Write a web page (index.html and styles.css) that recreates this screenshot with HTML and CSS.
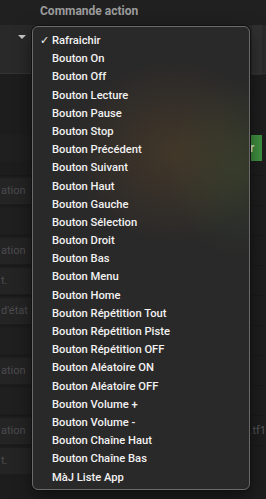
FILE: index.html
```html
<!DOCTYPE html>
<html lang="fr">
<head>
  <meta charset="UTF-8">
  <title>Commande action</title>
  <link rel="stylesheet" href="styles.css">
</head>
<body>
  <div class="page">
    <div class="section-title">Commande action</div>
    <div class="select-row">
      <span class="select-arrow"></span>
      <span class="select-side"></span>
    </div>
    <!-- faint form behind the open menu -->
    <div class="form">
      <div class="form-row top-row">
        <span class="field blank"></span>
        <span class="btn-green">r</span>
      </div>
      <div class="form-row"><span class="field">ation</span></div>
      <div class="form-row"><span class="field blank"></span></div>
      <div class="form-row"><span class="field">ation</span></div>
      <div class="form-row"><span class="field">t.</span></div>
      <div class="form-row"><span class="field">d'état</span></div>
      <div class="form-row"><span class="field blank"></span></div>
      <div class="form-row"><span class="field">ation</span></div>
      <div class="form-row"><span class="field blank"></span></div>
      <div class="form-row">
        <span class="field">ation</span>
        <span class="side-text">.tf1</span>
      </div>
      <div class="form-row"><span class="field">t.</span></div>
      <div class="form-row last-row">
        <span class="unit">A.n</span>
        <span class="unit wide">Unité</span>
      </div>
    </div>
  </div>

  <!-- open select menu -->
  <div class="menu">
    <ul class="menu-list">
      <li class="menu-item checked">Rafraichir</li>
      <li class="menu-item">Bouton On</li>
      <li class="menu-item">Bouton Off</li>
      <li class="menu-item">Bouton Lecture</li>
      <li class="menu-item">Bouton Pause</li>
      <li class="menu-item">Bouton Stop</li>
      <li class="menu-item">Bouton Précédent</li>
      <li class="menu-item">Bouton Suivant</li>
      <li class="menu-item">Bouton Haut</li>
      <li class="menu-item">Bouton Gauche</li>
      <li class="menu-item">Bouton Sélection</li>
      <li class="menu-item">Bouton Droit</li>
      <li class="menu-item">Bouton Bas</li>
      <li class="menu-item">Bouton Menu</li>
      <li class="menu-item">Bouton Home</li>
      <li class="menu-item">Bouton Répétition Tout</li>
      <li class="menu-item">Bouton Répétition Piste</li>
      <li class="menu-item">Bouton Répétition OFF</li>
      <li class="menu-item">Bouton Aléatoire ON</li>
      <li class="menu-item">Bouton Aléatoire OFF</li>
      <li class="menu-item">Bouton Volume +</li>
      <li class="menu-item">Bouton Volume -</li>
      <li class="menu-item">Bouton Chaîne Haut</li>
      <li class="menu-item">Bouton Chaîne Bas</li>
      <li class="menu-item">MàJ Liste App</li>
    </ul>
  </div>
</body>
</html>
```

FILE: styles.css
```css
body {
  margin: 0;
  background: #1d1d1e;
  font-family: Roboto, 'Noto Sans', sans-serif;
  color: #fff;
  overflow: hidden;
}
.page {
  width: 266px;
  height: 499px;
  overflow: hidden;
}
.section-title {
  height: 25px;
  padding-left: 40px;
  font-size: 12px;
  font-weight: 700;
  color: #9c9c9c;
  line-height: 22px;
  background: #202021;
}
.select-row {
  height: 48px;
  background: #29292a;
  border-bottom: 1px solid #333;
  display: flex;
  align-items: flex-start;
  justify-content: space-between;
}
.select-arrow {
  margin: 10px 0 0 18px;
  width: 0;
  height: 0;
  border-left: 4px solid transparent;
  border-right: 4px solid transparent;
  border-top: 4px solid #c8c8c8;
}
.select-side {
  width: 10px;
  height: 50px;
  background: #303031;
  margin-right: 4px;
}
.form {
  display: flex;
  flex-direction: column;
}
.form-row {
  height: 30px;
  display: flex;
  align-items: center;
  justify-content: space-between;
  border-top: 1px solid #19191a;
  box-sizing: border-box;
}
.form-row.top-row {
  margin-top: 61px;
  height: 40px;
  align-items: flex-start;
  border-top: none;
}
.form-row.last-row {
  justify-content: flex-start;
  align-items: flex-end;
  height: 20px;
  border-top: none;
}
.field {
  width: 30px;
  height: 26px;
  line-height: 26px;
  background: #242425;
  color: #4c4c4e;
  font-size: 11px;
  white-space: nowrap;
  padding-left: 1px;
}
.field.blank {
  background: #1f1f20;
}
.btn-green {
  width: 12px;
  margin-right: 4px;
  height: 26px;
  line-height: 26px;
  background: #3f8f41;
  color: #d9ead9;
  font-size: 12px;
  font-weight: 600;
  padding-left: 2px;
}
.side-text {
  color: #56565a;
  font-size: 11px;
}
.unit {
  color: #4e4e50;
  font-size: 10px;
  margin-left: 60px;
  line-height: 14px;
}
.unit.wide {
  margin-left: 38px;
}
.menu {
  position: absolute;
  left: 32px;
  top: 26px;
  width: 218px;
  height: 464px;
  box-sizing: border-box;
  border: 1px solid #6a6a6b;
  border-radius: 6px;
  box-shadow: 0 0 0 1px #111, 0 6px 18px rgba(0,0,0,0.5);
  background:
    radial-gradient(ellipse 100px 90px at 140px 125px, rgba(110,80,40,0.35), transparent),
    radial-gradient(ellipse 70px 90px at 205px 140px, rgba(60,100,50,0.28), transparent),
    #2a2929;
}
.menu-list {
  list-style: none;
  margin: 0;
  padding: 5px 0 0 0;
}
.menu-item {
  position: relative;
  height: 18.2px;
  line-height: 18px;
  padding-left: 19px;
  font-size: 11.2px;
  font-weight: 500;
  color: #f2f2f2;
  white-space: nowrap;
}
.menu-item.checked::before {
  content: "\2713";
  position: absolute;
  left: 7px;
  top: 0;
  font-size: 11px;
  font-family: 'DejaVu Sans', sans-serif;
}
```
